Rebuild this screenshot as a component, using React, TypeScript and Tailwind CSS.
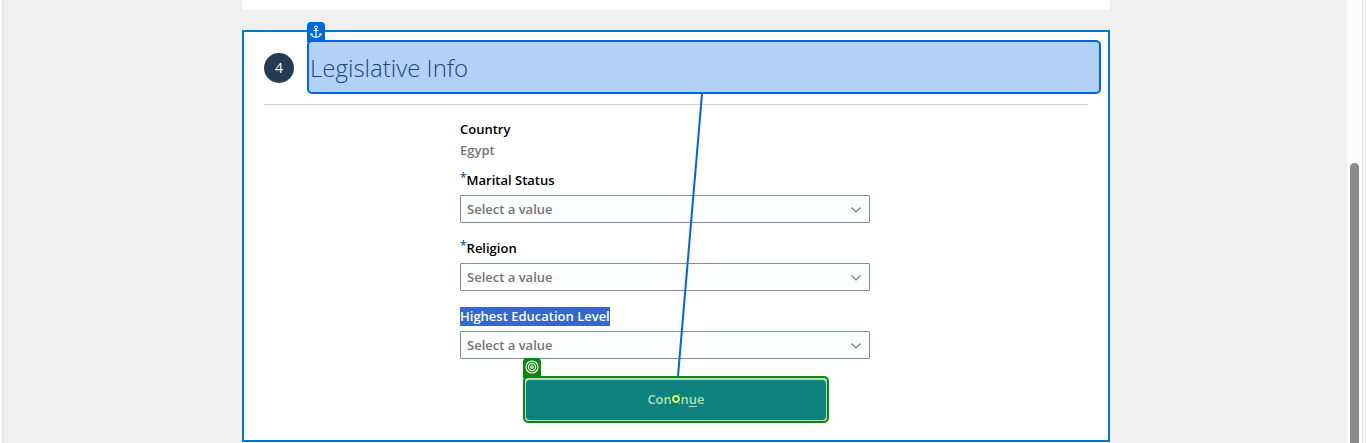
type FieldProps = { id: string; label: string; required?: boolean; selected?: boolean };

function SelectField({ id, label, required = false, selected = false }: FieldProps) {
  return (
    <div className="flex flex-col gap-[5px]">
      <label htmlFor={id} className="flex h-5 items-center text-[13px] leading-[19px] font-semibold text-black">
        {required && <span className="self-start text-xs leading-4 font-semibold text-[#0a5f9e]">*</span>}
        <span className={selected ? "bg-[#3367d1] text-white" : ""}>{label}</span>
      </label>
      <div className="relative">
        <select
          id={id}
          defaultValue=""
          className="block h-7 w-full appearance-none rounded-[1px] border border-[#7b919d] bg-[#fcfdfe] pt-0.5 pr-8 pl-1.5 text-[13px] font-semibold text-[#757575]"
        >
          <option value="">Select a value</option>
        </select>
        <svg
          viewBox="0 0 12 12"
          className="pointer-events-none absolute top-[9px] right-2 size-3"
          fill="none"
          stroke="#757575"
          strokeWidth="1.1"
          aria-hidden="true"
        >
          <path d="M1.5 3.5 6 8l4.500-4.500" />
        </svg>
      </div>
    </div>
  );
}

function AnchorIcon({ className }: { className: string }) {
  return (
    <svg viewBox="0 0 14 14" className={className} fill="none" stroke="currentColor" aria-hidden="true">
      <circle cx="7" cy="2.300" r="1.400" strokeWidth="1" />
      <path d="M7 3.700V12.500M4.500 5.500h5" strokeWidth="1.200" />
      <path d="M2.300 8.800C2.600 11 4.600 12.300 7 12.300s4.400-1.300 4.700-3.500" strokeWidth="1.100" />
      <path d="M1.300 10.200 2.200 8.300 4 9.600M12.700 10.200 11.800 8.300 10 9.600" strokeWidth=".9" />
    </svg>
  );
}

function TargetIcon({ className }: { className: string }) {
  return (
    <svg viewBox="0 0 14 14" className={className} fill="none" stroke="currentColor" aria-hidden="true">
      <circle cx="7" cy="7" r="6" strokeWidth="1.1" />
      <circle cx="7" cy="7" r="3.6" strokeWidth="1.1" />
      <circle cx="7" cy="7" r="1.3" strokeWidth="1.1" />
    </svg>
  );
}

export default function App() {
  return (
    <div className="flex min-h-screen bg-[#f5f5f5] font-['Open_Sans','Noto_Sans',sans-serif]">
      <div className="w-1 shrink-0 border-r-2 border-[#e6e6e6] bg-[#fafafa]" />
      <main className="flex min-w-0 flex-1 flex-col items-center gap-5 bg-[#f0f0f0] pl-px">
        <div className="h-2.5 w-full max-w-[868px] bg-white" />
        <section className="relative w-full max-w-[868px] border-2 border-[#027bc7] bg-white px-5 pt-2 pb-[17px]">
          <header className="flex items-center gap-[13px]">
            <span className="flex h-8 w-[30px] shrink-0 items-end justify-center">
              <span className="flex size-[30px] items-center justify-center rounded-full bg-[#253b52] text-sm text-white">
                4
              </span>
            </span>
            <div className="relative -mr-[13px] flex h-[54px] flex-1 items-center rounded-[5px] border-2 border-[#0066e0] bg-[#b3d1f6] px-px pt-0.5">
              <span className="absolute -top-5 -left-0.5 flex h-5 w-[18px] items-center justify-center rounded-t bg-[#0066e0] text-white">
                <AnchorIcon className="size-[14px]" />
              </span>
              <h2 className="text-2xl font-light text-[#1d467d]">Legislative Info</h2>
            </div>
          </header>

          <hr className="mt-2.5 border-[#cfcfcf]" />

          <form className="mt-3.5">
            <div className="ml-[196px] flex max-w-[410px] flex-col">
              <dl className="mb-2.5 text-[13px] leading-5 font-semibold">
                <dt className="mb-px text-black">Country</dt>
                <dd className="text-[#757575]">Egypt</dd>
              </dl>
              <div className="flex flex-col gap-[15px]">
                <SelectField id="marital-status" label="Marital Status" required />
                <SelectField id="religion" label="Religion" required />
                <SelectField id="education" label="Highest Education Level" selected />
              </div>
            </div>

            <div className="relative mx-auto mt-[17px] w-[306px] rounded-[5px] border-2 border-[#078a0b] bg-[#b5dcb6] px-px pt-0.5 pb-px">
              <span className="absolute -top-5 -left-0.5 flex h-5 w-[18px] items-start justify-center rounded-t bg-[#078a0b] pt-0.5 text-white">
                <TargetIcon className="size-[14px]" />
              </span>
              <button
                type="button"
                className="block h-10 w-full rounded bg-[#0e827f] text-[13px] font-semibold text-[#b1dfb3]"
              >
                Contin<span className="underline underline-offset-2">u</span>e
              </button>
              <svg
                viewBox="0 0 14 14"
                className="pointer-events-none absolute top-[14px] left-[144px] size-3.5"
                aria-hidden="true"
              >
                <path d="M7 .5 13 7 7 13.500 1 7Z" fill="#078a0b" />
                <circle cx="7" cy="7" r="5.200" fill="#078a0b" />
                <circle cx="7" cy="7" r="2.900" fill="none" stroke="#c9ebca" strokeWidth="2" />
              </svg>
            </div>
          </form>

          <svg
            viewBox="0 0 28 282"
            className="pointer-events-none absolute top-[62px] left-1/2 h-[282px] w-7"
            aria-hidden="true"
          >
            <path d="M26 0 2 282" stroke="#0066e0" strokeWidth="2" />
          </svg>
        </section>
      </main>
      <div className="flex w-4 shrink-0 border-r border-[#e2e2e2] bg-[#fcfcfc] px-[3px]">
        <div className="mt-[163px] w-[9px] rounded-t-full bg-[#8b8b8b]" />
      </div>
      <div className="w-[3px] shrink-0" />
    </div>
  );
}
